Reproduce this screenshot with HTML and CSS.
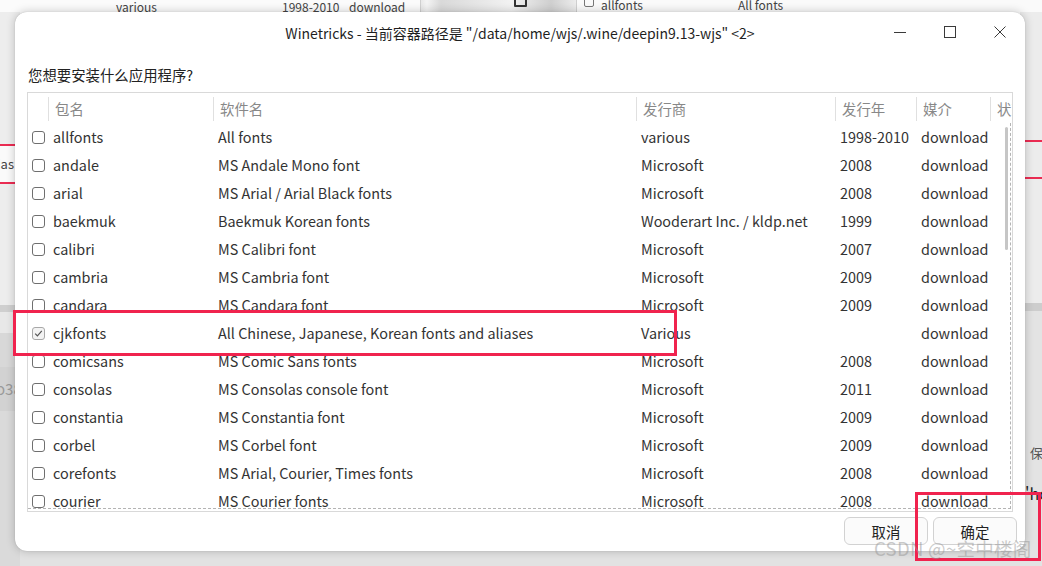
FILE: index.html
```html
<!DOCTYPE html>
<html lang="zh">
<head>
<meta charset="utf-8">
<title>Winetricks</title>
<link rel="stylesheet" href="styles.css">
</head>
<body>
<div class="desktop">
  <!-- background windows (behind the dialog) -->
  <div class="bg-top-left">
    <span class="bt-various">various</span>
    <span class="bt-year">1998-2010</span>
    <span class="bt-dl">download</span>
  </div>
  <div class="bg-top-mid"><span class="bt-icon"></span></div>
  <div class="bg-top-right">
    <span class="bt-cb"></span><span class="bt-name">allfonts</span><span class="bt-soft">All fonts</span>
  </div>
  <div class="bg-left">
    <div class="bl-a"></div>
    <div class="bl-b"><span>ias</span></div>
    <div class="bl-c"></div>
    <div class="bl-line"></div>
    <div class="bl-d"></div>
    <div class="bl-d2"></div>
    <div class="bl-e"><span>o38</span></div>
    <div class="bl-f"></div>
  </div>
  <div class="bg-right">
    <div class="br-a"></div>
    <div class="br-line"></div>
    <div class="br-b"><span class="br-bao">保</span><span class="br-hc">'hc</span></div>
  </div>

  <!-- the dialog -->
  <div class="dialog">
    <div class="titlebar">
      <div class="title">Winetricks - 当前容器路径是 "/data/home/wjs/.wine/deepin9.13-wjs" &lt;2&gt;</div>
      <div class="winbtns">
        <svg class="wb wb-min" width="14" height="14" viewBox="0 0 14 14"><path d="M1 7.5H13" stroke="#3a3a3a" stroke-width="1" fill="none"/></svg>
        <svg class="wb wb-max" width="14" height="14" viewBox="0 0 14 14"><rect x="1.5" y="1.5" width="11" height="11" stroke="#3a3a3a" stroke-width="1" fill="none"/></svg>
        <svg class="wb wb-close" width="14" height="14" viewBox="0 0 14 14"><path d="M1.5 1.5L12.5 12.5M12.5 1.5L1.5 12.5" stroke="#3a3a3a" stroke-width="1" fill="none"/></svg>
      </div>
    </div>
    <div class="content">
      <div class="prompt">您想要安装什么应用程序?</div>
      <div class="frame">
        <div class="header">
          <div class="hc hc-first"></div>
          <div class="hc">包名</div>
          <div class="hc">软件名</div>
          <div class="hc">发行商</div>
          <div class="hc">发行年</div>
          <div class="hc">媒介</div>
          <div class="hc">状态</div>
        </div>
        <div class="body">
          <div class="rows">
            <div class="row"><span class="c0"><span class="cb"></span></span><span>allfonts</span><span>All fonts</span><span>various</span><span>1998-2010</span><span>download</span><span></span></div>
            <div class="row"><span class="c0"><span class="cb"></span></span><span>andale</span><span>MS Andale Mono font</span><span>Microsoft</span><span>2008</span><span>download</span><span></span></div>
            <div class="row"><span class="c0"><span class="cb"></span></span><span>arial</span><span>MS Arial / Arial Black fonts</span><span>Microsoft</span><span>2008</span><span>download</span><span></span></div>
            <div class="row"><span class="c0"><span class="cb"></span></span><span>baekmuk</span><span>Baekmuk Korean fonts</span><span>Wooderart Inc. / kldp.net</span><span>1999</span><span>download</span><span></span></div>
            <div class="row"><span class="c0"><span class="cb"></span></span><span>calibri</span><span>MS Calibri font</span><span>Microsoft</span><span>2007</span><span>download</span><span></span></div>
            <div class="row"><span class="c0"><span class="cb"></span></span><span>cambria</span><span>MS Cambria font</span><span>Microsoft</span><span>2009</span><span>download</span><span></span></div>
            <div class="row"><span class="c0"><span class="cb"></span></span><span>candara</span><span>MS Candara font</span><span>Microsoft</span><span>2009</span><span>download</span><span></span></div>
            <div class="row"><span class="c0"><span class="cb cb-on"><svg width="11" height="11" viewBox="0 0 11 11"><path d="M2.2 5.6L4.4 7.8L8.8 2.8" stroke="#555" stroke-width="1.2" fill="none"/></svg></span></span><span>cjkfonts</span><span>All Chinese, Japanese, Korean fonts and aliases</span><span>Various</span><span></span><span>download</span><span></span></div>
            <div class="row"><span class="c0"><span class="cb"></span></span><span>comicsans</span><span>MS Comic Sans fonts</span><span>Microsoft</span><span>2008</span><span>download</span><span></span></div>
            <div class="row"><span class="c0"><span class="cb"></span></span><span>consolas</span><span>MS Consolas console font</span><span>Microsoft</span><span>2011</span><span>download</span><span></span></div>
            <div class="row"><span class="c0"><span class="cb"></span></span><span>constantia</span><span>MS Constantia font</span><span>Microsoft</span><span>2009</span><span>download</span><span></span></div>
            <div class="row"><span class="c0"><span class="cb"></span></span><span>corbel</span><span>MS Corbel font</span><span>Microsoft</span><span>2009</span><span>download</span><span></span></div>
            <div class="row"><span class="c0"><span class="cb"></span></span><span>corefonts</span><span>MS Arial, Courier, Times fonts</span><span>Microsoft</span><span>2008</span><span>download</span><span></span></div>
            <div class="row"><span class="c0"><span class="cb"></span></span><span>courier</span><span>MS Courier fonts</span><span>Microsoft</span><span>2008</span><span>download</span><span></span></div>
          </div>
          <div class="vscroll"><div class="thumb"></div></div>
        </div>
      </div>
      <div class="footer">
        <button class="btn">取消</button>
        <button class="btn">确定</button>
      </div>
    </div>
  </div>

  <!-- annotations on top -->
  <div class="mark mark-row"></div>
  <div class="mark mark-btn"></div>
  <div class="watermark">CSDN @~空中楼阁</div>
</div>
</body>
</html>
```

FILE: styles.css
```css
* { box-sizing: border-box; }
html, body { margin: 0; padding: 0; }
body {
  width: 1042px;
  height: 566px;
  overflow: hidden;
  font-family: "Noto Sans CJK SC", "Noto Sans", sans-serif;
  background: #e6e6e6;
}
.desktop {
  position: relative;
  width: 1042px;
  height: 566px;
  overflow: hidden;
  background: #e2e2e2;
}

/* ---------- background windows ---------- */
.bg-top-left {
  position: absolute; left: 0; top: 0; width: 420px; height: 20px;
  background: #fbfbfb;
  font-size: 12px; color: #444; line-height: 14px;
}
.bg-top-left span { position: absolute; top: 0; }
.bt-various { left: 116px; }
.bt-year { left: 282px; }
.bt-dl { left: 349px; }
.bg-top-mid {
  position: absolute; left: 420px; top: 0; width: 156px; height: 20px;
  background: linear-gradient(90deg, #e9e9e9 0, #f4f4f4 6px, #d9d9d9 20px, #f2f2f2 90px, #cfcfcf 130px, #ededed 156px);
  border-left: 1px solid #d0d0d0;
}
.bt-icon {
  position: absolute; left: 93px; top: -6px; width: 13px; height: 13px;
  border: 2px solid #333; border-radius: 1px;
}
.bg-top-right {
  position: absolute; left: 576px; top: 0; width: 466px; height: 20px;
  background: #fafafa; border-left: 1px solid #cfcfcf;
  font-size: 12px; color: #444; line-height: 14px;
}
.bt-cb { position: absolute; left: 7px; top: -3px; width: 10px; height: 10px; border: 1px solid #777; border-radius: 2px; }
.bt-name { position: absolute; left: 24px; top: -2px; }
.bt-soft { position: absolute; left: 161px; top: -2px; }

.bg-left {
  position: absolute; left: 0; top: 12px; width: 20px; height: 554px;
  display: flex; flex-direction: column;
}
.bl-a { height: 132px; background: #ededed; }
.bl-b {
  height: 40px; background: #fafafa;
  border-top: 2px solid #ea2c52; border-bottom: 2px solid #ea2c52;
  font-size: 13px; color: #444; line-height: 36px; overflow: hidden;
}
.bl-b span { margin-left: -3px; }
.bl-c { height: 121px; background: #ededed; }
.bl-line { height: 7px; background: #cfcfcf; }
.bl-d { height: 21px; background: #e8e8e8; }
.bl-d2 { height: 34px; background: #d8d8d8; }
.bl-e { height: 44px; background: #d2d2d2; font-size: 15px; color: #9a9a9a; line-height: 44px; overflow: hidden; white-space: nowrap; }
.bl-e span { margin-left: -4px; }
.bl-f { flex: 1; background: #dadada; }

.bg-right {
  position: absolute; left: 1020px; top: 12px; width: 22px; height: 554px;
  display: flex; flex-direction: column;
}
.br-a {
  height: 291px; background: #ececec;
  background-image: linear-gradient(#ececec 0, #ececec 128px, #ea2c52 128px, #ea2c52 130px, #ececec 130px, #ececec 165px, #ea2c52 165px, #ea2c52 167px, #ececec 167px);
}
.br-line { height: 8px; background: #cdcdcd; }
.br-b { flex: 1; background: #e3e3e3; position: relative; font-size: 13px; color: #555; }
.br-bao { position: absolute; left: 10px; top: 132px; }
.br-hc { position: absolute; left: 5px; top: 170px; font-size: 16px; color: #222; }

/* ---------- dialog ---------- */
.dialog {
  position: absolute; left: 15px; top: 12px;
  width: 1010px; height: 539px;
  background: #ffffff;
  border-radius: 12px;
  box-shadow: 0 0 10px rgba(0, 0, 0, 0.22), 0 0 1px rgba(0, 0, 0, 0.25);
  display: flex; flex-direction: column;
  overflow: hidden;
}
.titlebar {
  height: 40px; flex: none;
  display: flex; align-items: center; justify-content: center;
  position: relative;
}
.title {
  font-size: 14px; color: #1f1f1f; white-space: nowrap;
  margin-top: 1px;
}
.winbtns {
  position: absolute; right: 18px; top: 13px;
  display: flex; gap: 36px;
}
.wb { display: block; }

.content {
  flex: 1;
  display: flex; flex-direction: column;
  padding: 0 8px 0 12px;
}
.prompt {
  font-size: 14.4px; color: #222; line-height: 22px;
  margin-top: 12px; margin-left: 1px;
}
.frame {
  margin-top: 6px; margin-right: 4px;
  height: 420px;
  border: 1px solid #d9d9d9;
  padding-top: 2px;
  display: flex; flex-direction: column;
  overflow: hidden;
}
.header {
  height: 28px; flex: none;
  display: grid;
  grid-template-columns: 20px 165px 423px 199px 81px 74px 60px;
  font-size: 14.4px; color: #888; line-height: 28px;
  white-space: nowrap;
}
.hc {
  padding-left: 6px;
  border-left: 1px solid #e0e0e0;
  margin: 2px 0;
  line-height: 24px;
  overflow: hidden;
}
.hc-first { border-left: none; }

.body {
  position: relative;
  height: 386px; flex: none;
  width: 983px;
  border-right: 1px dashed #b4b4b4;
  border-bottom: 1px dashed #b4b4b4;
  overflow: hidden;
}
.rows { width: 980px; }
.row {
  height: 28px;
  display: grid;
  grid-template-columns: 20px 165px 423px 199px 81px 74px 20px;
  font-size: 14.4px; color: #333; line-height: 28px;
  white-space: nowrap;
}
.row > span { padding-left: 5px; overflow: hidden; }
.row > span.c0 { padding-left: 4px; display: flex; align-items: center; }
.cb {
  width: 13px; height: 13px;
  border: 1px solid #6f6f6f; border-radius: 3px;
  background: #fff;
  display: flex; align-items: center; justify-content: center;
}
.cb-on { border-color: #a8a8a8; background: #f3f3f3; }
.cb svg { display: block; }

.vscroll {
  position: absolute; right: 2px; top: 0; bottom: 0; width: 3px;
}
.thumb {
  margin-top: 4px;
  height: 123px;
  background: #c6c6c6;
  border-radius: 2px;
}

.footer {
  display: flex; justify-content: flex-end; gap: 5px;
  margin-top: 5px;
}
.btn {
  width: 84px; height: 28px;
  font-family: "Noto Sans CJK SC", "Noto Sans", sans-serif;
  font-size: 14.4px; color: #222;
  background: #fbfbfb;
  border: 1px solid #d2d2d2; border-radius: 6px;
  padding: 0;
}

/* ---------- annotations ---------- */
.mark {
  position: absolute;
  border: 3px solid #f0234e;
}
.mark-row { left: 13px; top: 310px; width: 664px; height: 46px; }
.mark-btn { left: 915px; top: 492px; width: 126px; height: 69px; }
.watermark {
  position: absolute; left: 874px; top: 535px;
  font-family: "Noto Sans CJK SC", "DejaVu Sans", sans-serif;
  font-size: 18.5px; color: rgba(150, 150, 150, 0.5);
  letter-spacing: 0.3px;
  white-space: nowrap;
}
```
